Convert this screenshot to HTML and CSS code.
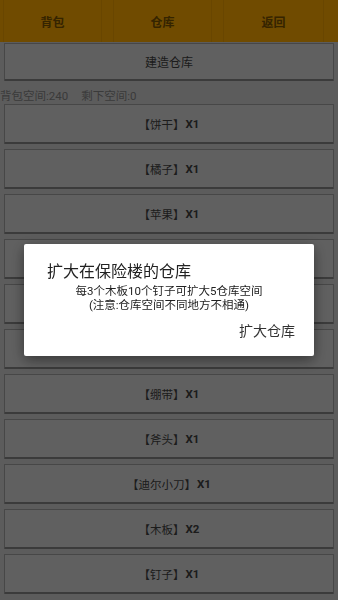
FILE: index.html
```html
<!DOCTYPE html>
<html lang="zh">
<head>
<meta charset="utf-8">
<title>仓库</title>
<link rel="stylesheet" href="styles.css">
</head>
<body>
<div class="topbar">
  <div class="tab">背包</div>
  <div class="tab">仓库</div>
  <div class="tab tab-wide">返回</div>
</div>
<div class="content">
  <div class="btn btn-build">建造仓库</div>
  <div class="info"><span>背包空间:240</span><span class="info-gap">剩下空间:0</span></div>
  <div class="list">
    <div class="btn item">【饼干】<b>X1</b></div>
    <div class="btn item">【橘子】<b>X1</b></div>
    <div class="btn item">【苹果】<b>X1</b></div>
    <div class="btn item"></div>
    <div class="btn item"></div>
    <div class="btn item"></div>
    <div class="btn item">【绷带】<b>X1</b></div>
    <div class="btn item">【斧头】<b>X1</b></div>
    <div class="btn item">【迪尔小刀】<b>X1</b></div>
    <div class="btn item">【木板】<b>X2</b></div>
    <div class="btn item">【钉子】<b>X1</b></div>
  </div>
</div>
<div class="scrim"></div>
<div class="dialog">
  <div class="dialog-title">扩大在保险楼的仓库</div>
  <div class="dialog-msg"><div>每3个木板10个钉子可扩大5仓库空间</div><div>(注意:仓库空间不同地方不相通)</div></div>
  <div class="dialog-actions"><span class="dialog-btn">扩大仓库</span></div>
</div>
</body>
</html>
```

FILE: styles.css
```css
html, body {
  margin: 0;
  padding: 0;
}
body {
  width: 338px;
  height: 600px;
  overflow: hidden;
  background: #d2d2d2;
  font-family: Roboto, "Noto Sans CJK SC", sans-serif;
  color: #444;
}
.topbar {
  display: flex;
  height: 42px;
  background: #ffaa00;
  padding-left: 3px;
  gap: 11px;
}
.tab {
  width: 97px;
  display: flex;
  align-items: center;
  justify-content: center;
  font-size: 12px;
  font-weight: bold;
  color: #7a5200;
  border-left: 1px solid rgba(0,0,0,0.06);
  border-right: 1px solid rgba(0,0,0,0.06);
}
.tab-wide {
  width: 99px;
}
.content {
  padding: 1px 4px 0;
}
.btn {
  box-sizing: border-box;
  height: 40px;
  background: #dbdbdb;
  border: 1px solid #a2a2a2;
  border-bottom: 2px solid #868686;
  border-radius: 1px;
  display: flex;
  align-items: center;
  justify-content: center;
  font-size: 11.5px;
  color: #404040;
}
.btn-build {
  height: 38px;
  font-size: 12px;
}
.info {
  margin: 7px 0 0 -4px;
  height: 16px;
  line-height: 16px;
  font-size: 11.5px;
  color: #858585;
  white-space: nowrap;
}
.info-gap {
  margin-left: 13px;
}
.list {
  display: flex;
  flex-direction: column;
  gap: 5px;
}
.item b {
  font-weight: bold;
  margin-left: 1px;
}
.scrim {
  position: fixed;
  inset: 0;
  background: rgba(0,0,0,0.56);
}
.dialog {
  position: fixed;
  left: 24px;
  top: 244px;
  width: 290px;
  height: 112px;
  box-sizing: border-box;
  background: #ffffff;
  border-radius: 2px;
  box-shadow: 0 4px 14px rgba(0,0,0,0.45);
  padding: 18px 19px 0 23px;
  color: #222;
}
.dialog-title {
  font-size: 16px;
  line-height: 20px;
  color: #222;
}
.dialog-msg {
  margin: 3px 0 0 -4px;
  text-align: center;
  font-size: 11.5px;
  line-height: 13.5px;
  color: #222;
}
.dialog-actions {
  margin-top: 9px;
  display: flex;
  justify-content: flex-end;
}
.dialog-btn {
  font-size: 14px;
  line-height: 20px;
  color: #333;
}
```
